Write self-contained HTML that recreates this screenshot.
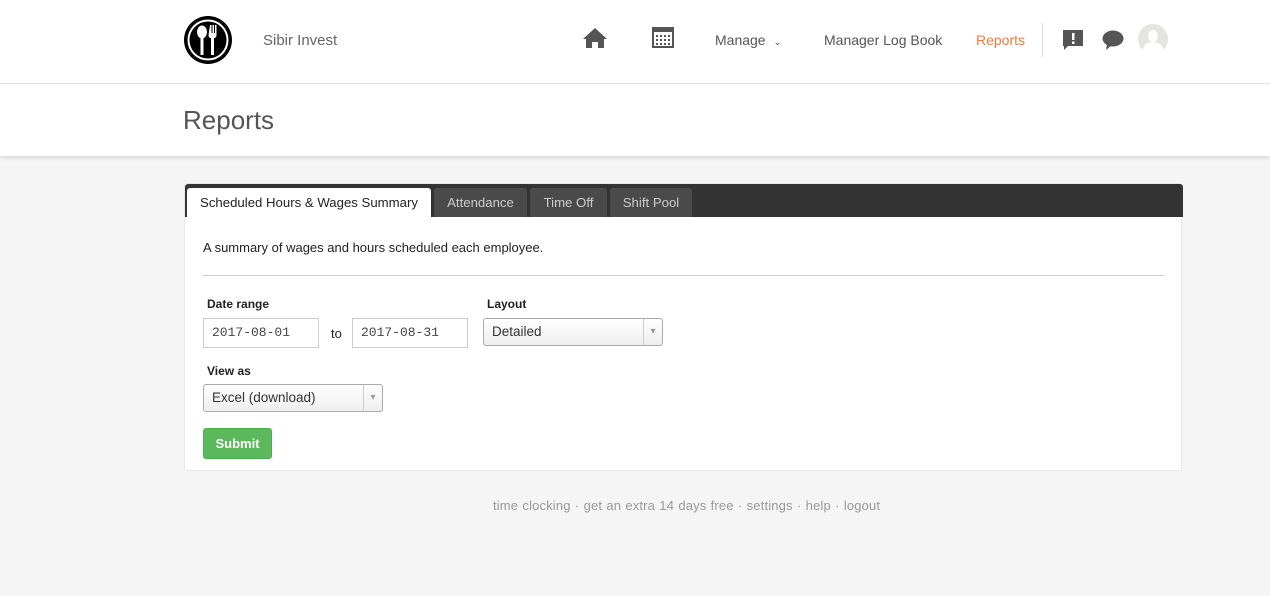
<!DOCTYPE html>
<html><head><style>
*{box-sizing:border-box}
body{margin:0;width:1270px;height:596px;background:#f5f5f5;font-family:"Liberation Sans",sans-serif;overflow:hidden;position:relative}
.top{position:absolute;left:0;top:0;width:1270px;height:84px;background:#fff;border-bottom:1px solid #e2e2e2}
.hdr{position:absolute;left:0;top:84px;width:1270px;height:72px;background:#fff;box-shadow:0 2px 4px rgba(0,0,0,.12)}
.a{position:absolute;font-size:14px;color:#555}
.card{position:absolute;left:184px;top:183px;width:998px;height:288px;background:#fff;border-radius:3px;border:1px solid #e8e8e8}
.tabbar{position:absolute;left:0;top:0;width:998px;height:33px;background:#333;border-radius:3px 3px 0 0}
.tab{position:absolute;top:4px;height:29px;background:#4a4a4a;color:#ccc;font-size:13.2px;line-height:29px;text-align:center;border-radius:3px 3px 0 0}
.lbl{position:absolute;font-size:12px;font-weight:bold;color:#222}
.inp{position:absolute;height:30px;border:1px solid #ccc;font-size:13px;color:#444;padding-left:8px;line-height:28px;font-family:"Liberation Mono",monospace;letter-spacing:0px}
.sel{position:absolute;height:28px;border:1px solid #aaa;border-radius:3px;background:linear-gradient(#fff,#eee);font-size:13.5px;color:#333;padding-left:8px;line-height:25px}
.sel:after{content:"▾";position:absolute;right:0;top:0;width:18px;height:26px;border-left:1px solid #ccc;color:#999;font-size:10px;text-align:center}
</style></head><body>
<div class="top">
<svg style="position:absolute;left:183px;top:15px" width="50" height="50" viewBox="0 0 50 50"><circle cx="25" cy="25" r="24" fill="#000"/><circle cx="25" cy="25" r="19.5" fill="none" stroke="#fff" stroke-width="2"/><ellipse cx="19" cy="17" rx="5" ry="6.5" fill="#fff"/><rect x="17.5" y="20" width="3" height="20" fill="#fff"/><path d="M27 10h1.5v8h1v-8h1.5v8h1v-8h1.5v10q0 3-2.5 3v17h-3v-17q-2.5 0-2.5-3z" fill="#fff"/></svg>
<div class="a" style="left:263px;top:32px;font-size:15px;color:#666">Sibir Invest</div>
<svg style="position:absolute;left:583px;top:27px" width="24" height="22" viewBox="0 0 24 22"><path d="M12 1L0 12h3v9h6v-6h6v6h6v-9h3z" fill="#555"/></svg>
<svg style="position:absolute;left:652px;top:27px" width="22" height="21" viewBox="0 0 22 21"><rect x="1" y="1" width="20" height="19" fill="none" stroke="#555" stroke-width="2"/><rect x="1" y="1" width="20" height="4" fill="#555"/><g fill="#555"><rect x="4" y="8" width="2" height="2"/><rect x="8" y="8" width="2" height="2"/><rect x="12" y="8" width="2" height="2"/><rect x="16" y="8" width="2" height="2"/><rect x="4" y="12" width="2" height="2"/><rect x="8" y="12" width="2" height="2"/><rect x="12" y="12" width="2" height="2"/><rect x="16" y="12" width="2" height="2"/><rect x="4" y="16" width="2" height="2"/><rect x="8" y="16" width="2" height="2"/><rect x="12" y="16" width="2" height="2"/><rect x="16" y="16" width="2" height="2"/></g></svg>
<div class="a" style="left:715px;top:32px">Manage&nbsp;&nbsp;<span style="font-size:10px">⌄</span></div>
<div class="a" style="left:824px;top:32px">Manager Log Book</div>
<div class="a" style="left:976px;top:32px;color:#f07b3f">Reports</div>
<div style="position:absolute;left:1042px;top:23px;width:1px;height:34px;background:#ddd"></div>
<svg style="position:absolute;left:1063px;top:30px" width="21" height="21" viewBox="0 0 21 21"><path d="M0 0h20v16h-15l-4 4v-4h-1z" fill="#555"/><rect x="9" y="3" width="2.5" height="7" fill="#fff"/><rect x="9" y="11.5" width="2.5" height="2.5" fill="#fff"/></svg>
<svg style="position:absolute;left:1102px;top:30px" width="22" height="21" viewBox="0 0 22 21"><ellipse cx="11" cy="8.5" rx="10.5" ry="8" fill="#555"/><path d="M5 14l-1 6 6-5z" fill="#555"/></svg>
<div style="position:absolute;left:1138px;top:24px;width:30px;height:30px;border-radius:50%;background:#e6e4e2;overflow:hidden"><div style="position:absolute;left:10px;top:6px;width:10px;height:12px;border-radius:50%;background:#fff"></div><div style="position:absolute;left:5px;top:18px;width:20px;height:16px;border-radius:50%;background:#fff"></div></div>
</div>
<div class="hdr"><div style="position:absolute;left:183px;top:21px;font-size:26px;color:#555">Reports</div></div>
<div class="card">
<div class="tabbar">
<div class="tab" style="left:2px;width:244px;background:#fff;color:#222">Scheduled Hours &amp; Wages Summary</div>
<div class="tab" style="left:249px;width:93px">Attendance</div>
<div class="tab" style="left:345px;width:77px">Time Off</div>
<div class="tab" style="left:425px;width:82px">Shift Pool</div>
</div>
<div style="position:absolute;left:18px;top:56px;font-size:13px;color:#222">A summary of wages and hours scheduled each employee.</div>
<div style="position:absolute;left:18px;top:91px;width:961px;height:1px;background:#ccc"></div>
<div class="lbl" style="left:22px;top:113px">Date range</div>
<div class="inp" style="left:18px;top:134px;width:116px">2017-08-01</div>
<div style="position:absolute;left:146px;top:142px;font-size:13px;color:#222">to</div>
<div class="inp" style="left:167px;top:134px;width:116px">2017-08-31</div>
<div class="lbl" style="left:302px;top:113px">Layout</div>
<div class="sel" style="left:298px;top:134px;width:180px">Detailed</div>
<div class="lbl" style="left:22px;top:180px">View as</div>
<div class="sel" style="left:18px;top:200px;width:180px">Excel (download)</div>
<div style="position:absolute;left:18px;top:244px;width:69px;height:31px;background:#5cb85c;border:1px solid #4cae4c;border-radius:3px;color:#fff;font-size:13px;font-weight:bold;text-align:center;line-height:29px">Submit</div>
</div>
<div style="position:absolute;left:493px;top:498px;font-size:13px;color:#999;letter-spacing:0.15px;word-spacing:0.5px;white-space:nowrap">time clocking · get an extra 14 days free · settings · help · logout</div>
</body></html>
